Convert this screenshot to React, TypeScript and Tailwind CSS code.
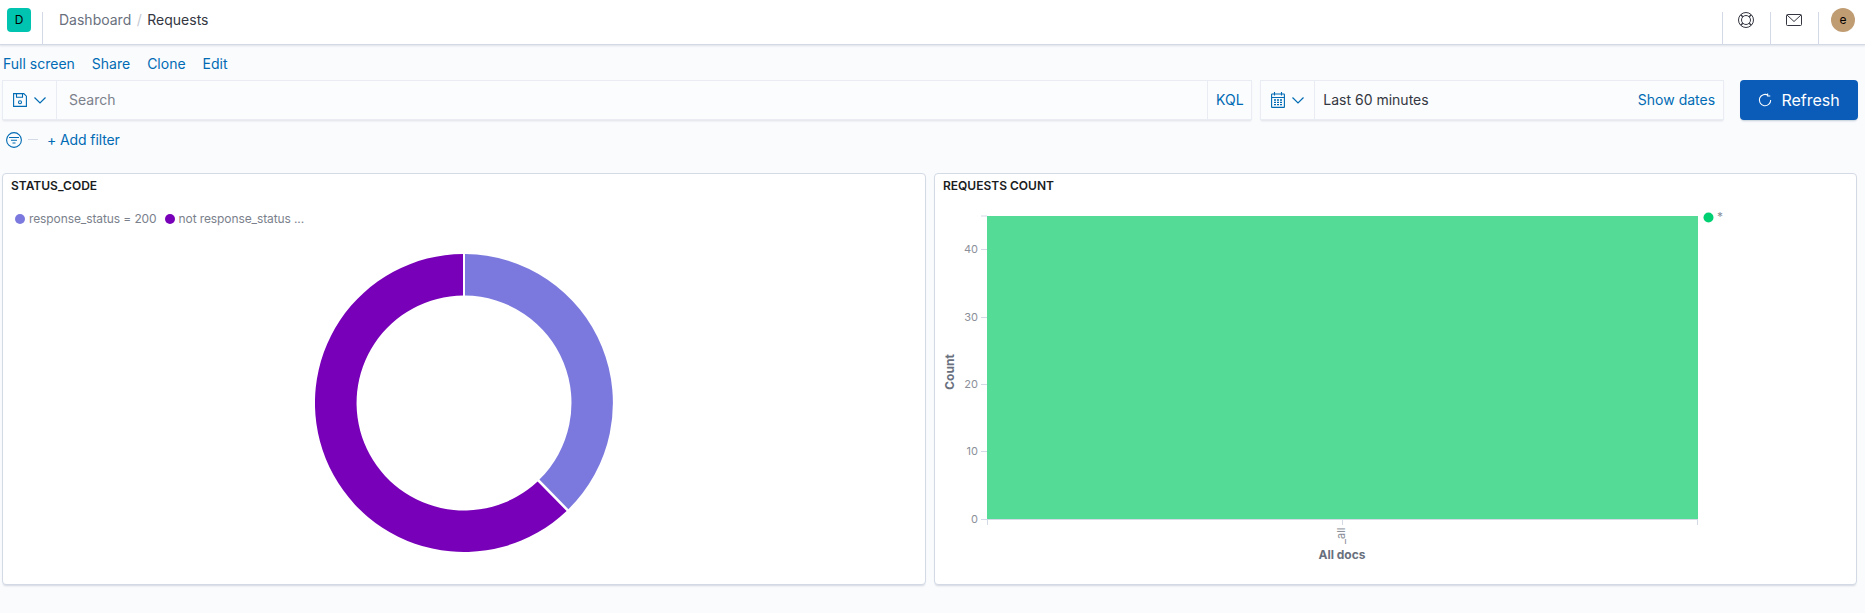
import React from 'react';

const font = { fontFamily: 'Inter, "Noto Sans", sans-serif' };

function Chevron() {
  return (
    <svg width="12" height="7" viewBox="0 0 12 7" fill="none" stroke="#006bb4" strokeWidth="1.2">
      <path d="M.5 .5 6 6l5.5-5.5" />
    </svg>
  );
}

function SaveIcon() {
  return (
    <svg width="14" height="14" viewBox="0 0 14 14" fill="none" stroke="#006bb4" strokeWidth="1.1">
      <path d="M.6 .6h10.2l2.6 2.6v10.2H.6z" />
      <path d="M3.5 .6v3.6h6V.6" />
      <circle cx="7" cy="9.2" r="1.5" />
    </svg>
  );
}

function CalendarIcon() {
  return (
    <svg width="14" height="16" viewBox="0 0 14 16" fill="none" stroke="#006bb4" strokeWidth="1.1">
      <rect x="0.6" y="2" width="12.8" height="13.4" rx="0.5" />
      <path d="M.6 5.5h12.8M3.5 0v3.5M10.5 0v3.5" />
      <path d="M3 8h2M6 8h2M9 8h2M3 10.3h2M6 10.3h2M9 10.3h2M3 12.6h2M6 12.6h2M9 12.6h2" strokeWidth="1.3" />
    </svg>
  );
}

function FilterIcon() {
  return (
    <svg width="16" height="16" viewBox="0 0 16 16" fill="none" stroke="#006bb4" strokeWidth="1.1">
      <circle cx="8" cy="8" r="7.4" />
      <path d="M3 5.5h10M5 8.2h6M6.5 11h3" />
    </svg>
  );
}

function HelpIcon() {
  return (
    <svg width="16" height="16" viewBox="0 0 16 16" fill="none" stroke="#343741" strokeWidth="1">
      <circle cx="8" cy="8" r="7.5" />
      <circle cx="8" cy="8" r="4.5" />
      <path d="M2.7 2.7 4.8 4.8M13.3 2.7l-2.1 2.1M2.7 13.3l2.1-2.1M13.3 13.3l-2.1-2.1" strokeWidth="1.4" />
    </svg>
  );
}

function MailIcon() {
  return (
    <svg width="16" height="12" viewBox="0 0 16 12" fill="none" stroke="#343741" strokeWidth="1">
      <rect x="0.5" y="0.5" width="15" height="11" rx="1" />
      <path d="M1 1l7 6.5L15 1" />
    </svg>
  );
}

function RefreshIcon() {
  return (
    <svg width="14" height="14" viewBox="0 0 16 16" fill="none" stroke="#ffffff" strokeWidth="1.2">
      <path d="M11.5 2.6A6.5 6.5 0 1 0 14.5 8" />
      <path d="M11 .5v3h3" />
    </svg>
  );
}

function Donut() {
  return (
    <svg width="298" height="298" viewBox="-149 -149 298 298">
      <path d="M1 -149A149 149 0 0 1 104.4 106.2L75.4 76.6A107.5 107.5 0 0 0 1 -107.5Z" fill="#7b79de" />
      <path d="M102.6 108A149 149 0 1 1 -1 -149L-1 -107.5A107.5 107.5 0 1 0 73.6 78.4Z" fill="#7800b8" />
    </svg>
  );
}

function BarChart() {
  const ticks = [
    { label: '40', y: 84 },
    { label: '30', y: 152 },
    { label: '20', y: 219 },
    { label: '10', y: 286 },
    { label: '0', y: 354 },
  ];
  return (
    <svg width="920" height="400" viewBox="0 0 920 400" style={font}>
      <text transform="translate(18 207) rotate(-90)" textAnchor="middle" fontSize="12" fontWeight="700" fill="#69707d">
        Count
      </text>
      <path d="M45 51h6" stroke="#d3dae6" />
      {ticks.map((t) => (
        <g key={t.label}>
          <path d={`M45 ${t.y + 0.5}h6`} stroke="#d3dae6" />
          <text x="42" y={t.y + 3.5} textAnchor="end" fontSize="11" fill="#8b8f9a">
            {t.label}
          </text>
        </g>
      ))}
      <rect x="51" y="51" width="711" height="303" fill="#54dc96" />
      <path d="M51 354.5h711M51.5 354v6M406.5 354v6M761.5 354v6" stroke="#d3dae6" />
      <text transform="translate(409 379) rotate(-90)" fontSize="11" fill="#8b8f9a">
        _all
      </text>
      <text x="406" y="394" textAnchor="middle" fontSize="12" fontWeight="700" fill="#69707d">
        All docs
      </text>
      <circle cx="772.5" cy="52.5" r="5" fill="#00d071" />
      <text x="781" y="56" fontSize="12" fill="#8b8f9a">
        *
      </text>
    </svg>
  );
}

export default function App() {
  return (
    <div className="w-[1865px] h-[613px] overflow-hidden bg-[#fafbfd] text-[14px] text-[#343741]" style={font}>
      {/* Top nav */}
      <header className="h-[45px] bg-white border-b border-[#d3dae6] shadow-[0_1px_2px_rgba(152,162,179,0.3)] flex items-stretch relative z-10">
        <div className="w-[42px] pl-[7px] pt-[8px] shrink-0">
          <div className="w-6 h-6 rounded-[4px] bg-[#00c4b0] flex items-center justify-center text-[12px] text-black">D</div>
        </div>
        <div className="mt-3 w-px bg-[#d3dae6]" />
        <div className="flex items-center gap-[5.5px] pl-4 pb-[5px] flex-1">
          <span className="text-[#69707d]">Dashboard</span>
          <span className="text-[#c5cad3]">/</span>
          <span>Requests</span>
        </div>
        <div className="mt-3 w-px bg-[#d3dae6]" />
        <div className="w-[47px] flex justify-center pt-3 pr-[2px]"><HelpIcon /></div>
        <div className="mt-3 w-px bg-[#d3dae6]" />
        <div className="w-[47px] flex justify-center pt-[14px] pr-[2px]"><MailIcon /></div>
        <div className="mt-3 w-px bg-[#d3dae6]" />
        <div className="w-[46px] pl-3 pt-2">
          <div className="w-6 h-6 rounded-full bg-[#c09c72] flex items-center justify-center text-[12px] text-black">e</div>
        </div>
      </header>

      {/* Links */}
      <nav className="h-[35px] flex items-center gap-[17px] pl-[3px] pt-[2px] text-[#006bb4]">
        <span>Full screen</span>
        <span>Share</span>
        <span>Clone</span>
        <span>Edit</span>
      </nav>

      {/* Query bar */}
      <div className="flex items-stretch h-10 pl-[2px] pr-[7px]">
        <div className="w-[1251px] flex items-stretch border border-[#e9edf3] shadow-[0_2px_2px_-1px_rgba(152,162,179,0.3)] bg-[#fbfcfd]">
          <div className="w-[54px] flex items-center justify-center gap-[7px] border-r border-[#e9edf3]">
            <SaveIcon />
            <Chevron />
          </div>
          <div className="flex-1 flex items-center pl-3 pb-[1px] text-[#7b818c]">Search</div>
          <div className="w-[44px] flex items-center justify-center pb-[1px] border-l border-[#e9edf3] text-[#006bb4]">KQL</div>
        </div>
        <div className="ml-2 w-[464px] flex items-stretch border border-[#e9edf3] shadow-[0_2px_2px_-1px_rgba(152,162,179,0.3)] bg-[#fbfcfd]">
          <div className="w-[54px] flex items-center justify-center gap-[7px] border-r border-[#e9edf3]">
            <CalendarIcon />
            <Chevron />
          </div>
          <div className="flex-1 flex items-center pl-2 pb-[1px]">Last 60 minutes</div>
          <div className="flex items-center pr-2 pb-[1px] text-[#006bb4]">Show dates</div>
        </div>
        <button className="ml-4 w-[118px] rounded-[4px] bg-[#0a5cb8] text-white text-[16px] flex items-center justify-center gap-[9px] pb-[1px] shadow-[0_2px_2px_-1px_rgba(54,97,126,0.3)]">
          <RefreshIcon />
          Refresh
        </button>
      </div>

      {/* Filter row */}
      <div className="h-10 flex items-center pl-[6px] pb-[1px] text-[#006bb4]">
        <FilterIcon />
        <div className="ml-[6px] w-[10px] h-px bg-[#d3dae6]" />
        <span className="ml-[9px] tracking-[-0.1px]">+ Add filter</span>
      </div>

      {/* Panels */}
      <div className="grid grid-cols-[924px_923px] gap-[8px] pl-[2px] pt-[13px]">
        <section className="h-[412px] bg-white rounded-[4px] border border-[#d3dae6] shadow-[0_2px_2px_-1px_rgba(152,162,179,0.4)]">
          <h2 className="h-[24px] pl-2 pt-[4px] text-[12px] leading-[16px] font-semibold text-[#1a1c21]">STATUS_CODE</h2>
          <div className="flex items-center pl-3 pt-[13px] text-[12px] leading-[16px] tracking-[-0.1px] text-[#7b818c]">
            <span className="w-[10px] h-[10px] rounded-full bg-[#7b79de]" />
            <span className="ml-1">response_status = 200</span>
            <span className="ml-2 w-[10px] h-[10px] rounded-full bg-[#7800b8]" />
            <span className="ml-1">not response_status ...</span>
          </div>
          <div className="flex justify-center pt-[27px]">
            <Donut />
          </div>
        </section>
        <section className="h-[412px] bg-white rounded-[4px] border border-[#d3dae6] shadow-[0_2px_2px_-1px_rgba(152,162,179,0.4)]">
          <h2 className="h-[24px] pl-2 pt-[4px] text-[12px] leading-[16px] font-semibold text-[#1a1c21]">REQUESTS COUNT</h2>
          <div className="-mt-[33px] ml-[1px]">
            <BarChart />
          </div>
        </section>
      </div>
    </div>
  );
}
